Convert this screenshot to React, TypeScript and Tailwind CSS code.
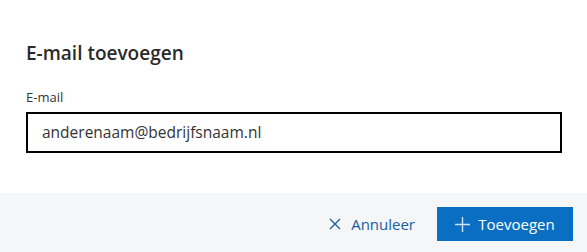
import React from "react";

export default function App() {
  return (
    <div className="w-[587px] h-[252px] bg-white flex flex-col overflow-hidden" style={{ fontFamily: '"Open Sans", "Noto Sans", sans-serif' }}>
      <div className="flex-1 px-[26px] pt-[40px]">
        <h1 className="text-[19px] leading-[26px] font-semibold text-[#2a2a2a]">E-mail toevoegen</h1>
        <label className="block mt-[22px] text-[13px] leading-[18px] text-[#333]">E-mail</label>
        <div className="mt-[6px] w-[536px] h-[41px] border-2 border-black flex items-center pl-[14px] text-[15.5px] text-[#333]">
          anderenaam@bedrijfsnaam.nl
        </div>
      </div>
      <div className="h-[59px] bg-[#f4f6f7] flex items-start justify-end pt-[14px] pr-[14px] gap-[22px]">
        <button className="h-[34px] flex items-center gap-[10px] text-[15px] text-[#1a5f9e]">
          <svg width="12" height="12" viewBox="0 0 12 12" stroke="currentColor" strokeWidth="1.4" fill="none">
            <path d="M1 1 L11 11 M11 1 L1 11" />
          </svg>
          Annuleer
        </button>
        <button className="h-[34px] w-[136px] bg-[#0a6fc2] text-white flex items-center justify-center gap-[8px] text-[15px]">
          <svg width="15" height="15" viewBox="0 0 15 15" stroke="#cfe3f5" strokeWidth="1.4" fill="none">
            <path d="M7.5 0 V15 M0 7.5 H15" />
          </svg>
          Toevoegen
        </button>
      </div>
    </div>
  );
}
